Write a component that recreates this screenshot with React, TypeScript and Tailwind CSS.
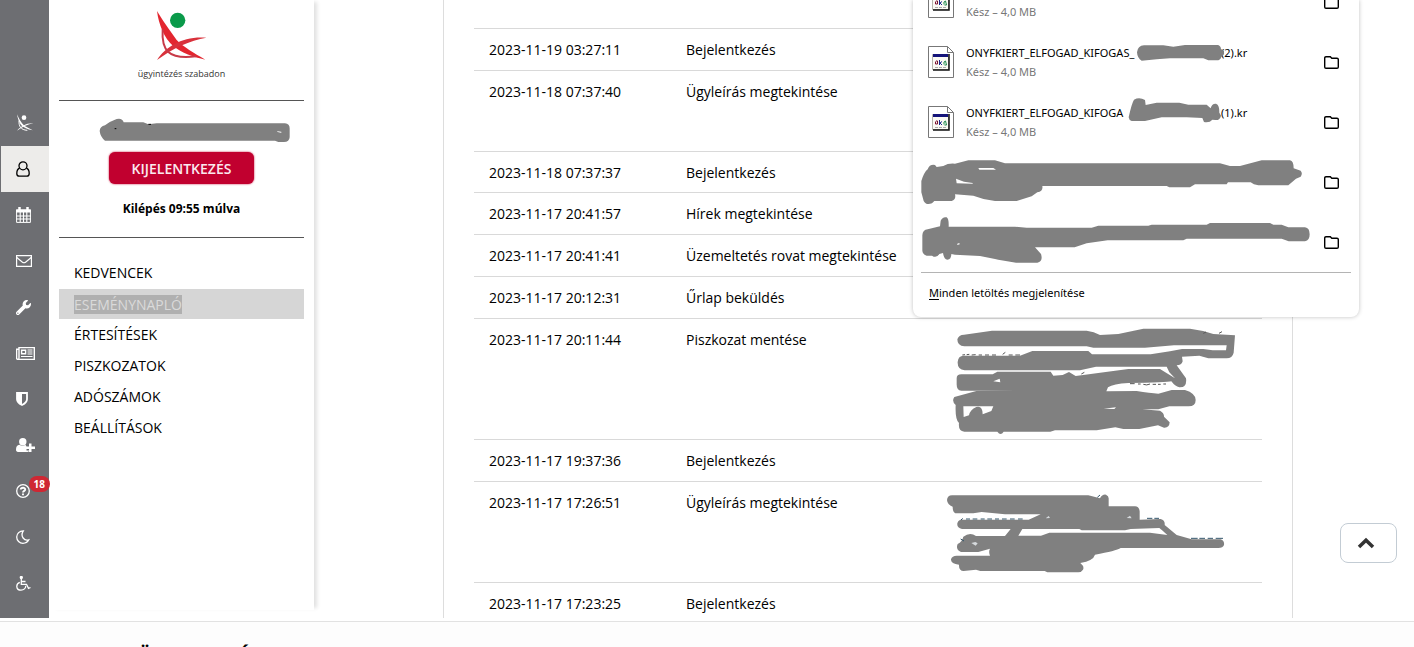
import type { ReactNode } from "react";

interface LogEntry {
  time: string;
  event: string;
  height: string;
  note?: ReactNode;
}

const navItems = ["KEDVENCEK", "ESEMÉNYNAPLÓ", "ÉRTESÍTÉSEK", "PISZKOZATOK", "ADÓSZÁMOK", "BEÁLLÍTÁSOK"];

const railItems: { label: string; icon: ReactNode; active?: boolean; badge?: string }[] = [
  {
    label: "Kezdőlap",
    icon: (
      <svg width="18" height="18" viewBox="0 0 54 54" fill="currentColor">
        <circle cx="24" cy="11" r="7" />
        <path d="M3 1C9 14 15 26 25 35L50 49C34 46 23 41 15 33C8 24 5 12 3 1Z" />
        <path d="M3 50C15 37 30 27 52 28C36 31 20 38 3 50Z" />
        <path d="M9 20C8 36 14 48 34 49" fill="none" stroke="currentColor" strokeWidth="3" />
      </svg>
    ),
  },
  {
    label: "Profil",
    active: true,
    icon: (
      <svg width="14" height="16" viewBox="0 0 14 16" fill="none" stroke="currentColor" strokeWidth="1.3">
        <circle cx="7" cy="4.8" r="4" />
        <path d="M3.6 7.2C1.5 8 .8 10 .8 12.5c0 1.6 1 2.7 2.4 2.7h7.6c1.4 0 2.4-1.1 2.4-2.7 0-2.5-.7-4.5-2.8-5.3" />
      </svg>
    ),
  },
  {
    label: "Naptár",
    icon: (
      <svg width="15" height="16" viewBox="0 0 15 16" fill="none" stroke="currentColor">
        <path d="M.6 3h13.8v12.4H.6z" />
        <path d="M0 4h15" strokeWidth="3" />
        <path d="M3.5 0v4M11.5 0v4" strokeWidth="2.5" />
        <path d="M0 9h15M0 12h15M4.2 5v10M7.5 5v10M10.8 5v10" strokeWidth="1.1" />
      </svg>
    ),
  },
  {
    label: "Üzenetek",
    icon: (
      <svg width="16" height="12" viewBox="0 0 16 12" fill="none" stroke="currentColor" strokeWidth="1.2">
        <path d="M.6.6h14.8v10.8H.6z" />
        <path d="M.8 2.5L6.5 7.2q1.5 1.1 3 0L15.2 2.5" />
      </svg>
    ),
  },
  {
    label: "Szolgáltatások",
    icon: (
      <svg width="15" height="15" viewBox="0 0 512 512" fill="currentColor">
        <path d="M507.7 109.1c-2.2-9-13.5-12.1-20.1-5.5l-74.4 74.4-67.9-11.3L334 98.9l74.4-74.4c6.6-6.6 3.4-17.9-5.7-20.2-47.4-11.7-99.6.9-136.6 37.9-39.6 39.6-50.5 97.1-34.1 147.2L18.7 402.8c-25 25-25 65.5 0 90.5s65.5 25 90.5 0l213.2-213.2c50.1 16.7 107.5 5.7 147.4-34.2 37.1-37.1 49.7-89.3 37.9-136.8zM64 472c-13.3 0-24-10.7-24-24s10.7-24 24-24 24 10.7 24 24-10.7 24-24 24z" />
      </svg>
    ),
  },
  {
    label: "Hírek",
    icon: (
      <svg width="19" height="13" viewBox="0 0 19 13" fill="none" stroke="currentColor" strokeWidth="1.4">
        <path d="M3 .6h15.3v11.8H2C1 12.4.6 11.8.6 11V2.2H3zM3 2v8.5c0 1-.4 1.9-1 1.9" />
        <path d="M5.6 3.2h4v3.6h-4z" />
        <path d="M11.5 3h5M11.5 5h5M11.5 7h5M5 9.5h11.5" strokeWidth="1.1" />
      </svg>
    ),
  },
  {
    label: "Biztonság",
    icon: (
      <svg width="12" height="14" viewBox="0 0 12 14" fill="none" stroke="currentColor">
        <path d="M1 1h10v6.2c0 2.5-2 4.3-5 5.8-3-1.5-5-3.3-5-5.8z" strokeWidth="1.8" />
        <path d="M1 1h5v12C3 11.5 1 9.7 1 7.2z" fill="currentColor" stroke="none" />
      </svg>
    ),
  },
  {
    label: "Meghatalmazás",
    icon: (
      <svg width="19" height="14" viewBox="0 0 19 14" fill="currentColor">
        <circle cx="6.8" cy="3.8" r="3.7" />
        <path d="M3.5 6.8c-2.5.2-3.5 2.2-3.5 5 0 1.4.8 2.1 2 2.1h9.5c1 0 1.7-.5 1.8-1.4h-2.8V8.700l-1-1.900c-2 1.300-4.200 1.200-6 0z" />
        <path d="M13 5.500h2.500v3H19V11h-3.500v3.300H13V11H10V8.500h3z" />
      </svg>
    ),
  },
  {
    label: "Súgó",
    badge: "18",
    icon: (
      <svg width="14" height="14" viewBox="0 0 14 14" fill="none" stroke="currentColor">
        <circle cx="7" cy="7" r="6.3" strokeWidth="1.3" />
        <path d="M4.7 5.5C5 3.2 9.3 3.2 9.2 5.4 9.2 6.9 7 6.8 7 8.5M7 9.5v1.7" strokeWidth="1.9" />
      </svg>
    ),
  },
  {
    label: "Sötét mód",
    icon: (
      <svg width="14" height="14" viewBox="0 0 14 14" fill="none" stroke="currentColor" strokeWidth="1.3">
        <path d="M7.3.8C3.6.8.7 3.5.7 7.1s2.9 6.2 6.2 6.2c2.6 0 4.8-1.3 5.9-3.5C8.5 11.3 3.8 6.5 7.3.8z" />
      </svg>
    ),
  },
  {
    label: "Akadálymentes",
    icon: (
      <svg width="15" height="15" viewBox="0 0 15 15" fill="none" stroke="currentColor" strokeWidth="1.3">
        <circle cx="5.3" cy="1.5" r="1" fill="currentColor" />
        <path d="M5.3 2.5V8.3H10.5L12.5 12.3L14.5 11.5M5.3 5.5H9.5" />
        <path d="M3.8 6.3C-.5 8-.2 14.2 5 14.2c2.8 0 4.7-2 4.8-4.4" />
      </svg>
    ),
  },
];

function DraftNote() {
  return (
    <svg className="absolute top-px -left-3" width="330" height="120" viewBox="0 0 990 360" fill="#808080">
      <path d="M82 58Q86 44 102 44L186 32H470Q492 34 510 45L565 42L640 26H780Q815 30 850 42L915 46L911 98Q907 115 890 115H835L808 107L756 110L758 124Q755 136 740 136L768 175Q772 203 748 202Q735 199 724 184Q712 188 595 189Q550 191 534 202L529 214L620 213Q660 220 685 221L725 210H765Q797 220 797 240Q797 259 776 259H718L685 268H637L690 272Q703 279 702 290L719 307Q718 324 702 323L684 316L628 327H580L556 322L500 331H375L361 335H221Q212 349 202 335H103Q84 334 87 309Q75 298 77 255Q64 243 73 231L139 213L264 212H94Q79 211 80 190V175Q80 163 94 163H188L202 155H362L370 167L398 165L417 156L437 168L595 147H690L735 175L718 157L710 140H498L450 151H104Q82 148 83 126Q85 106 102 107H270L307 93H475L486 103H662L720 94L756 87H820L848 91H888L890 76H732L645 83H490L470 79H103Q82 78 82 58Z" />
      <path d="M100 259H190L184 273L158 283Q158 256 139 261Q120 269 117 286L101 291ZM190 184L209 176L211 187ZM521 266L558 262L553 267Z" fill="white" />
      <path d="M820 40l8-4M867 40l9-5M97 105l8-1M110 104l8-1M125 105l12-1M146 105h10M165 105h12M186 105h12M218 103l8-6M236 105h12M256 105h14M454 162l9-5M600 191h14M624 192h8M640 193q10 4 20-1M668 193h10M684 193h8M700 192h8" fill="none" stroke="#555" strokeWidth="3" />
    </svg>
  );
}

function CaseNote() {
  return (
    <svg className="absolute top-0 -left-3" width="330" height="100" viewBox="0 6 990 300" fill="#808080">
      <path d="M51 60Q52 46 66 46H475L510 55Q517 42 528 44Q536 47 536 55V79H615Q628 80 629 94V119L692 117Q706 121 704 135L740 165L785 178H872Q884 182 882 195Q879 204 865 204H572Q558 213 495 224Q490 242 451 249Q464 260 459 269Q454 277 445 277H352L344 273H151L138 269L101 273Q86 272 87 254Q62 251 63 238Q66 227 80 227H180Q175 215 180 206L145 216H93Q76 208 83 192Q97 184 100 170Q120 155 138 168H225L242 147H96Q80 143 82 130Q86 117 100 119H296L332 103H225L155 96L130 100H76Q68 96 68 80Q52 74 51 60ZM277 147L265 167H333L358 158H660L712 165Q696 150 688 144L602 147L585 151H455L448 147Z" />
      <path d="M124 189l12-3 7 4-6 7zM347 115l9-7 4 6zM590 114l10-7 5 8z" fill="#d6dadd" />
      <path d="M783 175h20M808 175h17M833 175h16M857 175h22M651 115h16M673 115h14M93 120l5-5M108 117h12M128 117h14M152 117h12M172 117h14M195 117h12M216 117h14M240 117h14M264 117h14M92 177l10 6M502 52l8-7" stroke="#34566b" strokeWidth="3" />
    </svg>
  );
}

const entries: LogEntry[] = [
  { time: "2023-11-19 03:27:11", event: "Bejelentkezés", height: "h-[42px]" },
  { time: "2023-11-18 07:37:40", event: "Ügyleírás megtekintése", height: "h-[81px]" },
  { time: "2023-11-18 07:37:37", event: "Bejelentkezés", height: "h-[41px]" },
  { time: "2023-11-17 20:41:57", event: "Hírek megtekintése", height: "h-[42px]" },
  { time: "2023-11-17 20:41:41", event: "Üzemeltetés rovat megtekintése", height: "h-[42px]" },
  { time: "2023-11-17 20:12:31", event: "Űrlap beküldés", height: "h-[42px]" },
  { time: "2023-11-17 20:11:44", event: "Piszkozat mentése", height: "h-[121px]", note: <DraftNote /> },
  { time: "2023-11-17 19:37:36", event: "Bejelentkezés", height: "h-[42px]" },
  { time: "2023-11-17 17:26:51", event: "Ügyleírás megtekintése", height: "h-[101px]", note: <CaseNote /> },
  { time: "2023-11-17 17:23:25", event: "Bejelentkezés", height: "h-9" },
];

const downloads: { file: boolean; name?: string; suffix?: string; mask?: ReactNode }[] = [
  { file: true },
  {
    file: true,
    name: "ONYFKIERT_ELFOGAD_KIFOGAS_",
    suffix: "(2).kr",
    mask: (
      <svg className="absolute -top-[11px] right-0" width="100" height="40" viewBox="3 96 300 120" fill="#808080" overflow="visible">
        <path d="M51 157Q53 137 72 136H130L160 140L195 135H292Q302 136 303 147L312 153V163L304 171Q301 182 288 181H265L250 175H150L110 178L65 182Q52 175 51 157Z" />
      </svg>
    ),
  },
  {
    file: true,
    name: "ONYFKIERT_ELFOGAD_KIFOGA",
    suffix: "(1).kr",
    mask: (
      <svg className="absolute -top-[11px] right-0" width="100" height="40" viewBox="3 276 300 120" fill="#808080" overflow="visible">
        <path d="M26 352Q35 310 42 299Q58 290 75 300L77 315L110 308H178L205 314H260L272 325Q275 310 288 311Q299 315 298 338L303 347Q299 362 286 360L277 359Q269 369 252 366L247 354L200 352H125L75 363H35Q27 361 26 352Z" />
      </svg>
    ),
  },
  {
    file: false,
    mask: (
      <svg className="absolute top-0 left-1" width="400" height="60" viewBox="51 6 1200 180" fill="#808080">
        <path d="M64 93Q72 67 83 58Q89 42 105 45L110 51L130 48Q145 39 165 41L205 31H285L315 40H960L990 48H1020L1085 31H1170Q1181 33 1181 55L1202 62Q1209 70 1202 80L1188 86L1165 106H1075Q1060 104 1052 97H984L980 103H885L870 112H808L800 108H427Q430 124 412 127L395 139L350 153H285Q250 149 220 137L165 133Q169 148 155 153H103L96 160Q78 167 71 153L64 127Z" />
        <path d="M168 86L192 95L218 99V101L170 100ZM235 54H280L288 59H238Z" fill="white" />
      </svg>
    ),
  },
  {
    file: false,
    mask: (
      <svg className="absolute top-0 left-1" width="400" height="60" viewBox="51 186 1200 180" fill="#808080">
        <path d="M67 256Q68 239 83 238L120 229L122 212Q128 199 140 202Q147 207 146 230H345L380 233H575L595 227H745L755 224H920L930 219H1110L1120 224H1145L1165 232H1215Q1229 234 1229 253Q1229 272 1215 274H1166L1145 266H860L850 271H623L560 280L524 292H405L423 312Q430 334 412 338H348Q300 331 285 327L240 318L165 314L154 312Q154 329 142 329Q132 329 129 309L118 312Q109 326 96 317H80Q68 313 67 302Z" />
        <path d="M172 281l6-2 1 4-7 2z" fill="white" />
      </svg>
    ),
  },
];

function FileIcon() {
  return (
    <svg className="shrink-0" width="26" height="32" viewBox="0 0 26 32" fill="none">
      <path d="M.5.5h19l6 6v25H.5z" fill="white" stroke="#777" />
      <path d="M19.5.5v6h6" stroke="#777" />
      <path d="M4.5 8.5h16v15h-16z" fill="#fbfaf4" stroke="#b7b4ac" />
      <path d="M21 8v16H5" stroke="#111" strokeWidth="1.5" />
      <path d="M5 9.5h15" stroke="#14147a" strokeWidth="3" />
      <path d="M8 15h1.5v3H7.5V15.5" stroke="#7a1230" />
      <path d="M11.5 14v5M14 15.5l-2 1.5 2 2" stroke="#1e2a8c" />
      <path d="M16 18.5v-2.5l1.5-1 1 4h-2" stroke="#1c8a4b" />
      <path d="M7 21.5h11" stroke="#aaa" strokeDasharray="3 1" />
    </svg>
  );
}

function FolderIcon() {
  return (
    <svg width="15" height="13" viewBox="0 0 15 13" fill="none" stroke="currentColor" strokeWidth="1.4">
      <path d="M.7 2V11q0 1.300 1.300 1.300H13q1.300 0 1.300-1.300V3.500q0-1.200-1.300-1.200H7.800L6.300.7H2Q.7.700.7 2z" />
    </svg>
  );
}

function DownloadsPopup() {
  return (
    <section
      aria-label="Letöltések"
      className="absolute top-0 right-[55px] w-[446px] overflow-hidden rounded-b-lg bg-white font-['Noto_Sans',sans-serif] text-[11px] shadow-[0_0_4px_rgba(0,0,0,0.25)]"
    >
      <ul className="-mt-7">
        {downloads.map((item, index) => (
          <li key={index} className="relative flex h-[60px] items-center gap-3 pr-5 pl-[15px]">
            {item.file ? (
              <>
                <FileIcon />
                <div className="flex-1 leading-[19px]">
                  <p className="flex h-[19px] text-black">
                    {item.name && (
                      <span className="relative w-[255px]">
                        {item.name}
                        {item.mask}
                      </span>
                    )}
                    {item.suffix}
                  </p>
                  <p className="text-[#777]">Kész – 4,0 MB</p>
                </div>
              </>
            ) : (
              item.mask
            )}
            <button type="button" aria-label="Mappa megnyitása" className="ml-auto">
              <FolderIcon />
            </button>
          </li>
        ))}
      </ul>
      <div className="mx-2 border-t border-[#b4b4b4] px-2 pb-1">
        <a href="#letoltesek" className="flex h-10 items-center text-black">
          <span className="underline underline-offset-2">M</span>inden letöltés megjelenítése
        </a>
      </div>
    </section>
  );
}

function IconRail() {
  return (
    <nav aria-label="Fő menü" className="z-10 w-[49px] shrink-0 bg-[#6d6e72] pt-[100px] pb-3 text-white">
      {railItems.map((item) => (
        <a
          key={item.label}
          href="#menu"
          aria-label={item.label}
          className={`relative flex h-[46px] items-center border-l border-[#6d6e72] pl-[15px] ${item.active ? "bg-[#edecea] text-black" : ""}`}
        >
          {item.icon}
          {item.badge && (
            <span className="absolute top-2 -right-px rounded-full bg-[#cf2733] px-[5px] text-[10px] leading-4 font-bold">
              {item.badge}
            </span>
          )}
        </a>
      ))}
    </nav>
  );
}

function SidePanel() {
  return (
    <aside className="mb-2 w-[265px] shrink-0 px-[10px] shadow-[5px_0_4px_-2px_rgba(0,0,0,0.12)]">
      <div className="flex h-[101px] flex-col items-center border-b border-[#555] pt-[10px]">
        <svg width="52" height="52" viewBox="468 30 156 156">
          <circle cx="533" cy="61" r="23" fill="#0a9a4a" />
          <path d="M471 33C485 57 506 86 530 120C552 142 580 158 616 179C580 172 545 158 520 139C491 113 476 72 471 33Z" fill="#e3262f" />
          <path d="M471 180C497 139 551 107 619 113C570 121 518 145 471 180Z" fill="#d9313b" />
          <path d="M488 88C484 150 504 180 588 169" fill="none" stroke="#c83a48" strokeWidth="6" />
        </svg>
        <p className="text-[9px] leading-6 text-[#333]">ügyintézés szabadon</p>
      </div>

      <div className="flex h-[137px] flex-col items-center border-b border-[#555] pt-[17px]">
        <svg className="ml-[26px]" width="192" height="24" viewBox="297 354 576 72" fill="#808080">
          <path d="M299 393Q300 379 315 376Q332 363 350 357Q367 353 371 367H430L445 373L470 370H855Q869 371 869 385V412Q868 426 852 426H835L825 422H315Q301 411 299 393Z" />
          <path d="M831 393l13 2v4l-11-3z" fill="#eee" />
          <path d="M344 386h5M445 373h8" stroke="black" strokeWidth="3" />
        </svg>
        <button
          type="button"
          className="mt-[10px] h-8 w-[145px] rounded-md bg-[#c1002f] pt-px text-sm font-semibold text-[#fbe9ee] shadow-[0_0_2px_#c1002f]"
        >
          KIJELENTKEZÉS
        </button>
        <p className="mt-[15px] text-xs leading-5 font-bold text-black">Kilépés 09:55 múlva</p>
      </div>

      <ul className="mt-5 flex flex-col gap-px">
        {navItems.map((item) => (
          <li key={item}>
            {item === "ESEMÉNYNAPLÓ" ? (
              <a href="#naplo" aria-current="page" className="flex h-[30px] items-center bg-[#d6d6d6] px-[15px] text-[#dadada]">
                <span className="bg-[#b0b0b0] leading-[19px]">{item}</span>
              </a>
            ) : (
              <a href="#naplo" className="flex h-[30px] items-center px-[15px] text-black">
                {item}
              </a>
            )}
          </li>
        ))}
      </ul>
    </aside>
  );
}

export default function App() {
  return (
    <div className="relative h-screen overflow-hidden bg-white font-['Open_Sans',sans-serif] text-sm text-black">
      <div className="flex">
        <IconRail />
        <SidePanel />
        <main className="min-w-0 flex-1 pl-2">
          <div className="mx-auto h-full max-w-[850px] border-x border-[#ddd] px-[30px]">
            <table className="w-full table-fixed border-separate border-spacing-0 text-left align-top leading-[21px]">
              <colgroup>
                <col className="w-[197px]" />
                <col className="w-[271px]" />
                <col />
              </colgroup>
              <tbody>
                <tr>
                  <td colSpan={3} className="h-7 p-0"></td>
                </tr>
                {entries.map((entry) => (
                  <tr key={entry.time} className="align-top">
                    <td className={`border-t border-[#d9d9d9] px-[15px] py-0 pt-[10px] whitespace-nowrap ${entry.height}`}>{entry.time}</td>
                    <td className="border-t border-[#d9d9d9] px-[15px] py-0 pt-[10px] whitespace-nowrap">{entry.event}</td>
                    <td className="relative border-t border-[#d9d9d9] px-[15px] py-0">{entry.note}</td>
                  </tr>
                ))}
              </tbody>
            </table>
          </div>
        </main>
      </div>

      <footer className="mt-[3px] border-t border-[#e2e2e2] bg-[#fdfdfd] px-5 pt-5 pb-8">
        <h2 className="text-xl leading-7 font-bold">HIVATALOS ÜGYKEZELÉS</h2>
      </footer>

      <DownloadsPopup />

      <button
        type="button"
        aria-label="Vissza a tetejére"
        className="fixed right-[17px] bottom-[84px] flex h-10 w-[57px] items-center rounded-lg border border-[#c3ccd4] bg-white pl-4"
      >
        <svg width="18" height="12" viewBox="0 0 18 12" fill="none" stroke="#333" strokeWidth="3.5">
          <path d="M2 10L9 3.2L16 10" />
        </svg>
      </button>
    </div>
  );
}
